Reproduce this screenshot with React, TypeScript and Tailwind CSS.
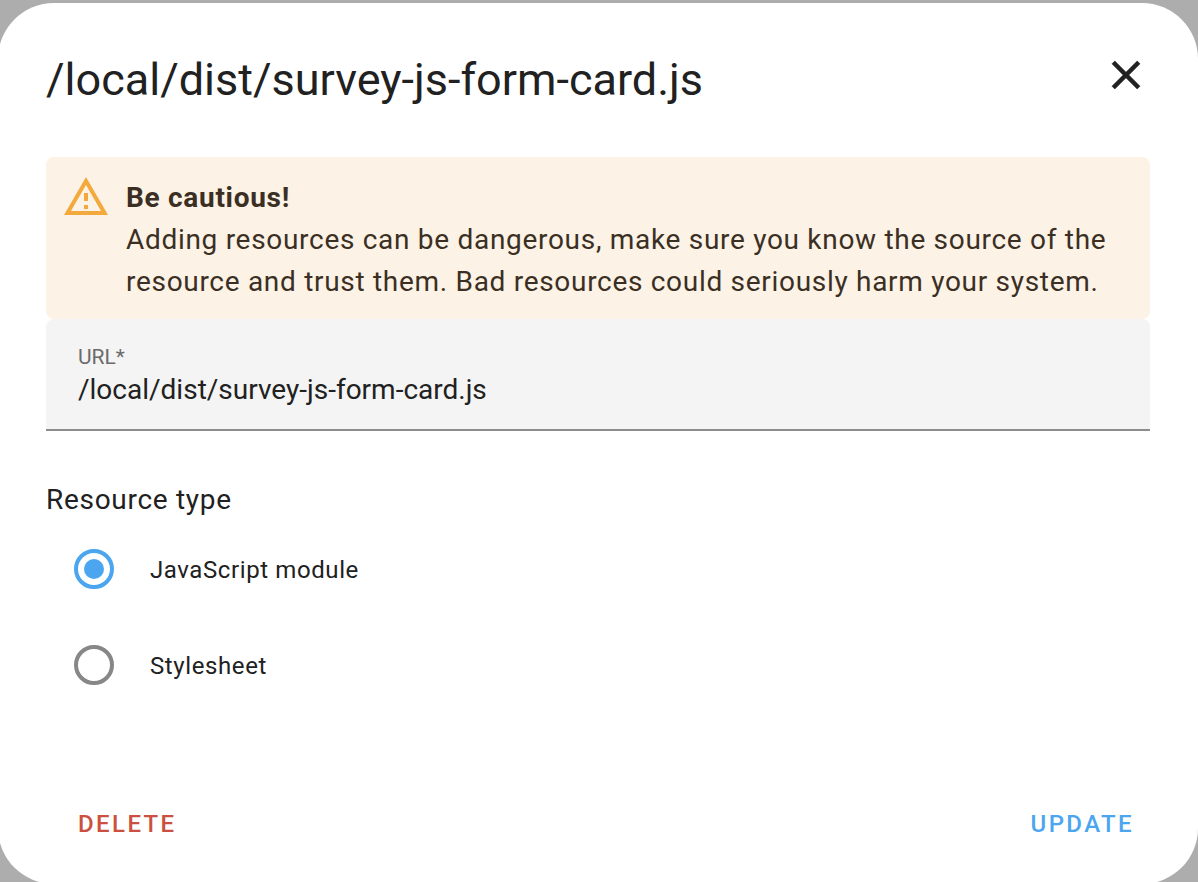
import { useState } from "react";

const resourceTypes = [
  { value: "module", label: "JavaScript module" },
  { value: "css", label: "Stylesheet" },
];

function AlertIcon() {
  return (
    <svg viewBox="0 0 24 24" className="size-12 shrink-0 fill-[#f4a93c]" aria-hidden="true">
      <path d="M12,2L1,21H23M12,6L19.53,19H4.47M11,10V14H13V10M11,16V18H13V16" />
    </svg>
  );
}

function CloseIcon() {
  return (
    <svg
      viewBox="0 0 24 24"
      className="size-12 fill-current stroke-current"
      strokeWidth="0.3"
      strokeLinejoin="round"
      aria-hidden="true"
    >
      <path d="M19,6.41L17.59,5L12,10.59L6.41,5L5,6.41L10.59,12L5,17.59L6.41,19L12,13.41L17.59,19L19,17.59L13.41,12L19,6.41Z" />
    </svg>
  );
}

export default function App() {
  const [url, setUrl] = useState("/local/dist/survey-js-form-card.js");
  const [type, setType] = useState("module");

  return (
    <div className="flex min-h-screen flex-col overflow-hidden bg-[#adadad] pt-[3px] font-['Roboto',sans-serif] text-[#212121]">
      <form
        role="dialog"
        aria-labelledby="dialog-title"
        onSubmit={(e) => e.preventDefault()}
        className="-mb-0.5 -ml-0.5 flex grow flex-col rounded-[56px] bg-white px-12 pt-12 pb-8"
      >
        <header className="flex items-start justify-between pb-12">
          <h1 id="dialog-title" className="text-[45px] leading-[58px]">
            /local/dist/survey-js-form-card.js
          </h1>
          <button type="button" aria-label="Close" className="cursor-pointer">
            <CloseIcon />
          </button>
        </header>

        <div role="alert" className="flex gap-4 rounded-lg bg-[#fdf2e6] p-4 text-[#3b2f24]">
          <AlertIcon />
          <div className="pt-1 text-[28px] leading-[42px] tracking-wide">
            <strong className="block font-bold">Be cautious!</strong>
            Adding resources can be dangerous, make sure you know the source of the resource and
            trust them. Bad resources could seriously harm your system.
          </div>
        </div>

        <div className="flex flex-col rounded-t-lg border-b-2 border-[#8c8c8c] bg-[#f4f4f4] px-8 pt-[25px] pb-[19px]">
          <label htmlFor="url" className="text-[21px] leading-[26px] text-[#6b6b6b]">
            URL*
          </label>
          <input
            id="url"
            type="text"
            value={url}
            onChange={(e) => setUrl(e.target.value)}
            className="h-10 w-full bg-transparent text-[28px] outline-none"
          />
        </div>

        <fieldset className="pt-12">
          <legend className="float-left w-full text-[28px] leading-[42px] tracking-wide">
            Resource type
          </legend>
          <div className="clear-both flex flex-col">
            {resourceTypes.map((item) => (
              <label
                key={item.value}
                className="flex h-24 cursor-pointer items-center gap-9 pl-7 text-2xl tracking-wide"
              >
                <input
                  type="radio"
                  name="resource-type"
                  value={item.value}
                  checked={type === item.value}
                  onChange={() => setType(item.value)}
                  className="grid size-10 appearance-none place-items-center rounded-full border-4 border-[#878787] before:size-5 before:rounded-full checked:border-[#4ba6ef] checked:before:bg-[#4ba6ef]"
                />
                <span className="pt-0.5">{item.label}</span>
              </label>
            ))}
          </div>
        </fieldset>

        <footer className="mt-auto flex items-center justify-between">
          <button
            type="button"
            className="h-14 cursor-pointer px-8 text-2xl font-medium tracking-widest text-[#cb503f] uppercase"
          >
            Delete
          </button>
          <button
            type="submit"
            className="h-14 cursor-pointer px-4 text-2xl font-medium tracking-widest text-[#4ba6ef] uppercase"
          >
            Update
          </button>
        </footer>
      </form>
    </div>
  );
}
